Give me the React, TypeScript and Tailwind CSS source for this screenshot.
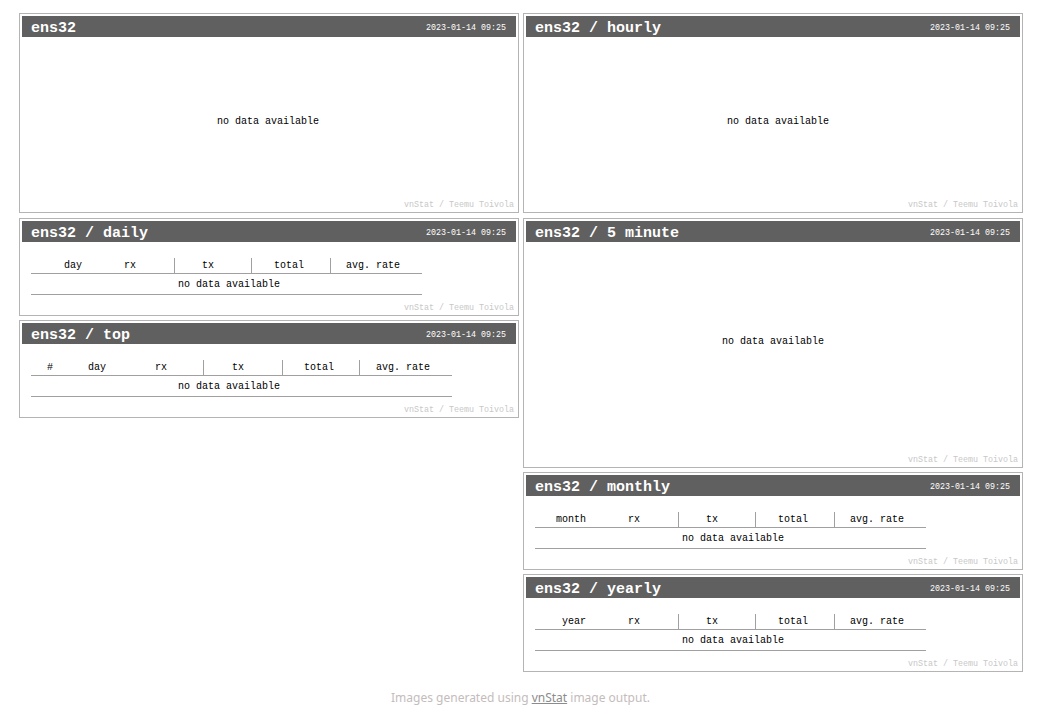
import React from "react";

const mono = "font-['Liberation_Mono','DejaVu_Sans_Mono',monospace]";
const DATE = "2023-01-14 09:25";

function Header({ title }: { title: string }) {
  return (
    <div className="h-[21px] bg-[#606060] flex items-center justify-between pt-[4px] pl-[9px] pr-[10px] text-white">
      <span className="text-[15px] leading-[15px] font-bold">{title}</span>
      <span className="text-[8.33px] leading-[9px]">{DATE}</span>
    </div>
  );
}

function Watermark() {
  return (
    <div className="mt-auto text-right pr-[2px] pb-[1px] text-[8.33px] leading-[8px] text-[#c8c8c8]">
      vnStat / Teemu Toivola
    </div>
  );
}

function Panel({
  height,
  title,
  extra,
  children,
}: {
  height: string;
  title: string;
  extra?: string;
  children: React.ReactNode;
}) {
  return (
    <div className={`${height} ${extra ?? ""} w-[500px] border border-[#b4b4b4] p-[2px] flex flex-col bg-white ${mono}`}>
      <Header title={title} />
      <div className="flex-1 flex flex-col text-[10px] text-black">{children}</div>
    </div>
  );
}

function NoData({ top, left }: { top: string; left: string }) {
  return <div className={`${top} ${left} leading-[12px] text-[10px]`}>no data available</div>;
}

function DailyLikeTable({ first, firstPad }: { first: string; firstPad: string }) {
  return (
    <div className="mt-[16px] ml-[9px] w-[391px]">
      <div className="h-[16px] flex border-b border-[#a0a0a0] leading-[15px]">
        <div className={`w-[93px] ${firstPad}`}>{first}</div>
        <div className="w-[50px]">rx</div>
        <div className="w-[77px] border-l border-[#a0a0a0] pl-[27px]">tx</div>
        <div className="w-[79px] border-l border-[#a0a0a0] pl-[22px]">total</div>
        <div className="w-[92px] border-l border-[#a0a0a0] pl-[15px]">avg. rate</div>
      </div>
      <div className="h-[21px] border-b border-[#a0a0a0] pt-[2px] pl-[147px] leading-[18px]">no data available</div>
    </div>
  );
}

function TopTable() {
  return (
    <div className="mt-[16px] ml-[9px] w-[421px]">
      <div className="h-[16px] flex border-b border-[#a0a0a0] leading-[15px]">
        <div className="w-[57px] pl-[16px]">#</div>
        <div className="w-[67px]">day</div>
        <div className="w-[48px]">rx</div>
        <div className="w-[79px] border-l border-[#a0a0a0] pl-[28px]">tx</div>
        <div className="w-[77px] border-l border-[#a0a0a0] pl-[21px]">total</div>
        <div className="w-[93px] border-l border-[#a0a0a0] pl-[16px]">avg. rate</div>
      </div>
      <div className="h-[21px] border-b border-[#a0a0a0] pt-[2px] pl-[147px] leading-[18px]">no data available</div>
    </div>
  );
}

export default function App() {
  return (
    <div className="min-h-screen bg-white pt-[13px]">
      <div className="flex gap-[4px] pl-[19px] items-start">
        {/* left column */}
        <div className="flex flex-col gap-[4px]">
          <Panel height="h-[200px]" title="ens32" extra="mb-[1px]">
            <NoData top="mt-[79px]" left="pl-[195px]" />
            <Watermark />
          </Panel>
          <Panel height="h-[98px]" title="ens32 / daily">
            <DailyLikeTable first="day" firstPad="pl-[33px]" />
            <Watermark />
          </Panel>
          <Panel height="h-[98px]" title="ens32 / top">
            <TopTable />
            <Watermark />
          </Panel>
        </div>

        {/* right column */}
        <div className="flex flex-col gap-[4px]">
          <Panel height="h-[200px]" title="ens32 / hourly" extra="mb-[1px]">
            <NoData top="mt-[79px]" left="pl-[201px]" />
            <Watermark />
          </Panel>
          <Panel height="h-[250px]" title="ens32 / 5 minute">
            <NoData top="mt-[94px]" left="pl-[196px]" />
            <Watermark />
          </Panel>
          <Panel height="h-[98px]" title="ens32 / monthly">
            <DailyLikeTable first="month" firstPad="pl-[21px]" />
            <Watermark />
          </Panel>
          <Panel height="h-[98px]" title="ens32 / yearly">
            <DailyLikeTable first="year" firstPad="pl-[27px]" />
            <Watermark />
          </Panel>
        </div>
      </div>

      <p className="mt-[17px] text-center text-[12px] leading-[18px] text-[#c4bcbc] font-['Noto_Sans','Open_Sans',sans-serif]">
        Images generated using{" "}
        <a href="#" className="underline text-[#8c8c8c]">
          vnStat
        </a>{" "}
        image output.
      </p>
    </div>
  );
}
